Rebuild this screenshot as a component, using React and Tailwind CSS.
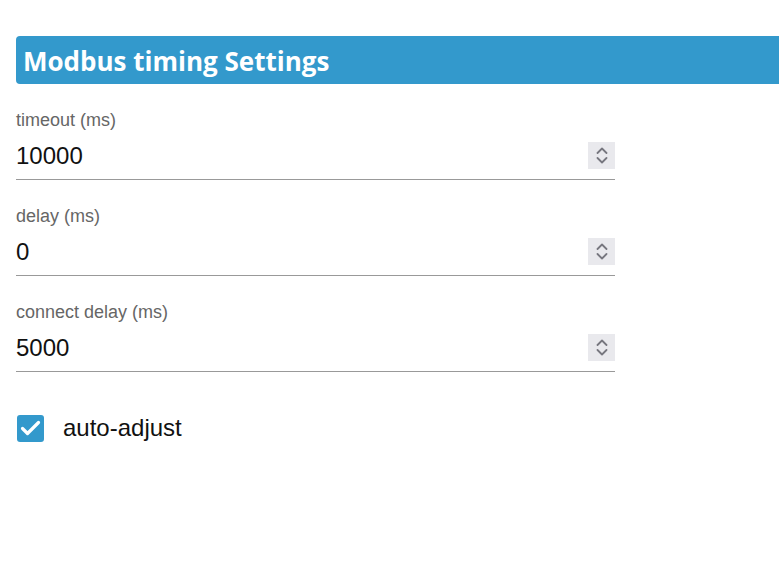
import React from "react";

function Spinner() {
  return (
    <div className="w-[27px] h-[27px] bg-[#e9e9ed] flex flex-col items-center justify-center gap-[3px]">
      <svg width="12" height="7" viewBox="0 0 12 7" fill="none" stroke="#77777f" strokeWidth="1.8" strokeLinecap="round" strokeLinejoin="round">
        <path d="M1.5 6 L6 1.5 L10.5 6" />
      </svg>
      <svg width="12" height="7" viewBox="0 0 12 7" fill="none" stroke="#77777f" strokeWidth="1.8" strokeLinecap="round" strokeLinejoin="round">
        <path d="M1.5 1 L6 5.5 L10.5 1" />
      </svg>
    </div>
  );
}

function Field({ label, value }) {
  return (
    <div className="w-[599px] mb-[25px]">
      <div className="text-[18px] leading-[22px] text-[#666666]">{label}</div>
      <div className="flex items-center justify-between h-[49px] border-b border-[#999999]">
        <span className="text-[24px] text-[#111111] leading-[28px] pt-[2px]">{value}</span>
        <Spinner />
      </div>
    </div>
  );
}

export default function App() {
  return (
    <div className="w-[779px] h-[582px] bg-white overflow-hidden" style={{ fontFamily: '"Liberation Sans", Arial, sans-serif' }}>
      <div className="pt-[36px] pl-[16px]">
        <div className="w-[800px] h-[48px] bg-[#3399cc] rounded-[4px] flex items-center pl-[7px]">
          <span className="text-white font-bold text-[26px] leading-none pt-[1px]" style={{ fontFamily: '"Open Sans", sans-serif' }}>Modbus timing Settings</span>
        </div>
      </div>
      <div className="pl-[16px] pt-[25px]">
        <Field label="timeout (ms)" value="10000" />
        <Field label="delay (ms)" value="0" />
        <Field label="connect delay (ms)" value="5000" />
        <label className="flex items-center mt-[42px] ml-[1px]">
          <span className="w-[27px] h-[27px] rounded-[3px] bg-[#3399cc] flex items-center justify-center">
            <svg width="21" height="16" viewBox="0 0 21 16" fill="none" stroke="white" strokeWidth="3.2" strokeLinecap="round" strokeLinejoin="round">
              <path d="M2.5 8.5 L7.5 13.5 L18.5 2.5" />
            </svg>
          </span>
          <span className="ml-[19px] text-[24px] leading-[28px] text-[#111111]">auto-adjust</span>
        </label>
      </div>
    </div>
  );
}
